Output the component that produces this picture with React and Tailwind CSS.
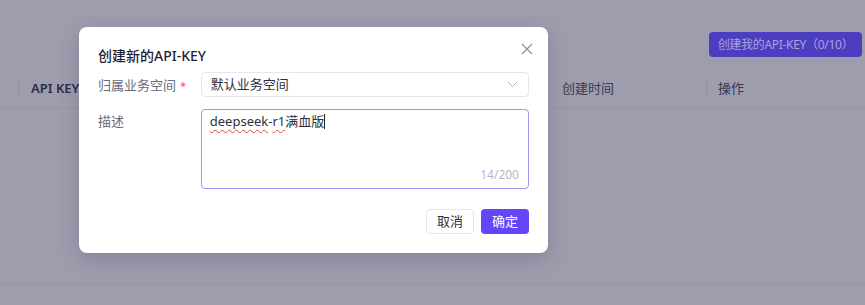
import React from "react";

export default function App() {
  const font = { fontFamily: '"Noto Sans", "Noto Sans CJK SC", sans-serif' };
  return (
    <div
      className="relative w-[865px] h-[305px] overflow-hidden bg-[#9e9dae]"
      style={font}
    >
      {/* underlying page */}
      <div className="flex flex-col">
        <div className="flex justify-end pt-[32px] pr-[3px]">
          <button className="h-[25px] w-[153px] rounded-[4px] bg-[#4d3dc1] text-[12px] text-[#a8a2de] leading-[25px] tracking-[-0.3px]">
            创建我的API-KEY（0/10）
          </button>
        </div>
        <div className="mt-[13px] flex h-[38px] items-center border-b border-[#96959f] text-[13px]">
          <div className="h-[19px] w-[1px] bg-[#93929f] ml-[18px]" />
          <div className="ml-[12px] w-[531px] font-semibold text-[#2b2a45]">API KEY</div>
          <div className="w-[144px] text-[#3a394e]">创建时间</div>
          <div className="h-[17px] w-[1px] bg-[#93929f]" />
          <div className="ml-[11px] text-[#3a394e]">操作</div>
        </div>
        <div className="mt-[176px] border-b border-[#98979f]" />
      </div>

      {/* modal */}
      <div className="absolute left-[79px] top-[27px] w-[469px] h-[226px] rounded-[8px] bg-white shadow-[0_6px_20px_rgba(60,60,80,0.25)] px-[19px] pt-[19px] pb-[19px] flex flex-col">
        <div className="flex items-center justify-between h-[20px]">
          <div className="text-[14px] font-medium text-[#1f1e33] leading-[20px]">创建新的API-KEY</div>
          <svg width="12" height="12" viewBox="0 0 12 12" className="mr-[-4px] mt-[-14px]">
            <path d="M1 1L11 11M11 1L1 11" stroke="#8c8c96" strokeWidth="1.1" fill="none" />
          </svg>
        </div>
        <div className="mt-[5px] flex items-center">
          <div className="w-[103px] text-[13px] text-[#6b6a7a] leading-[24px] pt-[2px]">
            归属业务空间<span className="ml-[4px] text-[#f2505f] text-[11px]">*</span>
          </div>
          <div className="flex h-[25px] w-[329px] items-center justify-between rounded-[4px] border border-[#e6e6ec] pl-[9px] pr-[10px]">
            <span className="text-[13px] text-[#2f2f3a]">默认业务空间</span>
            <svg width="11" height="7" viewBox="0 0 11 7">
              <path d="M1 1L5.5 5.5L10 1" stroke="#b3b3bd" strokeWidth="1" fill="none" />
            </svg>
          </div>
        </div>
        <div className="mt-[11px] flex items-start">
          <div className="w-[103px] text-[13px] text-[#6b6a7a] leading-[24px]">描述</div>
          <div className="relative h-[80px] w-[329px] rounded-[4px] border border-[#a395f2] pl-[8px] pt-[1px]">
            <div className="text-[13px] text-[#2f2f3a] leading-[20px] flex items-center">
              <span className="underline decoration-wavy decoration-[#e0473f] decoration-[1px] underline-offset-[3px]">deepseek</span>
              <span>-</span>
              <span className="underline decoration-wavy decoration-[#e0473f] decoration-[1px] underline-offset-[3px]">r1</span>
              <span>满血版</span>
              <span className="inline-block h-[15px] w-[1px] bg-[#222]" />
            </div>
            <div className="absolute right-[9px] bottom-[4px] text-[12px] text-[#b8b8c0]">14/200</div>
          </div>
        </div>
        <div className="mt-auto flex justify-end gap-[7px]">
          <button className="h-[25px] w-[48px] rounded-[4px] border border-[#e4e4ea] bg-white text-[13px] text-[#2f2f3a]">
            取消
          </button>
          <button className="h-[25px] w-[48px] rounded-[4px] bg-[#6445f8] text-[13px] text-white">
            确定
          </button>
        </div>
      </div>
    </div>
  );
}
